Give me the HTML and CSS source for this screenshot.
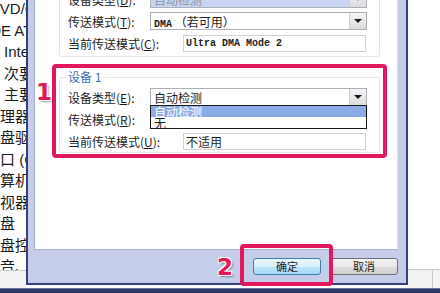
FILE: index.html
```html
<!DOCTYPE html>
<html lang="zh-CN">
<head>
    <meta charset="UTF-8">
    <title>IDE 通道属性</title>
    <link rel="stylesheet" href="styles.css">
</head>
<body>
    <div class="screen">
        <div class="main">
            <div class="tree">
                <div class="tree-list">
                    <div class="node n-dvd">DVD/CD-ROM 驱动器</div>
                    <div class="node n-ide">IDE ATA/ATAPI 控制器</div>
                    <div class="node n-sub">Intel(R) 82371AB/EB PCI Bus Master IDE Controller</div>
                    <div class="node n-sub">次要 IDE 通道</div>
                    <div class="node n-sub">主要 IDE 通道</div>
                    <div class="node n-top">处理器</div>
                    <div class="node n-top">磁盘驱动器</div>
                    <div class="node n-top">端口 (COM 和 LPT)</div>
                    <div class="node n-top">计算机</div>
                    <div class="node n-top">监视器</div>
                    <div class="node n-top">键盘</div>
                    <div class="node n-top">软盘控制器</div>
                    <div class="node n-top">声音、视频和游戏控制器</div>
                </div>
                <div class="tree-status"></div>
            </div>

            <div class="dialog">
                <div class="page">
                    <fieldset class="group group-top">
                        <legend>设备 0</legend>
                        <div class="row">
                            <label>设备类型(<u>D</u>):</label>
                            <div class="combo combo-off">
                                <span class="combo-text">自动检测</span>
                                <span class="combo-btn"></span>
                            </div>
                        </div>
                        <div class="row">
                            <label>传送模式(<u>T</u>):</label>
                            <div class="combo">
                                <span class="combo-text"><span class="mono">DMA</span> （若可用）</span>
                                <span class="combo-btn"></span>
                            </div>
                        </div>
                        <div class="row">
                            <label>当前传送模式(<u>C</u>):</label>
                            <div class="field mono">Ultra DMA Mode 2</div>
                        </div>
                    </fieldset>

                    <div class="mark">
                        <span class="step step-one">1</span>
                        <fieldset class="group">
                            <legend>设备 1</legend>
                            <div class="row">
                                <label>设备类型(<u>E</u>):</label>
                                <div class="combo">
                                    <span class="combo-text">自动检测</span>
                                    <span class="combo-btn"></span>
                                    <div class="combo-list">
                                        <div class="combo-item active">自动检测</div>
                                        <div class="combo-item">无</div>
                                    </div>
                                </div>
                            </div>
                            <div class="row">
                                <label>传送模式(<u>R</u>):</label>
                            </div>
                            <div class="row">
                                <label>当前传送模式(<u>U</u>):</label>
                                <div class="field">不适用</div>
                            </div>
                        </fieldset>
                    </div>
                </div>

                <div class="buttons">
                    <span class="step">2</span>
                    <button class="btn btn-ok">确定</button>
                    <button class="btn">取消</button>
                </div>
            </div>

            <div class="side">
                <div class="side-fill"></div>
                <div class="side-status"><span class="side-cell"></span></div>
            </div>
        </div>
        <div class="taskbar"></div>
    </div>
</body>
</html>
```

FILE: styles.css
```css
body {
    margin: 0;
    font-family: "Liberation Sans", "Noto Sans CJK SC", sans-serif;
    background: #ffffff;
    overflow: hidden;
}
.screen {
    width: 440px;
    height: 293px;
    display: flex;
    flex-direction: column;
}
.main {
    display: flex;
    height: 288px;
}

/* arbre des périphériques, à gauche */
.tree {
    width: 26px;
    display: flex;
    flex-direction: column;
    overflow: hidden;
    background: #ffffff;
}
.tree-list {
    height: 270px;
    overflow: hidden;
    font-size: 15px;
    line-height: 21.5px;
    color: #1c1c1c;
}
.node {
    white-space: nowrap;
}
.node:first-child {
    margin-top: -2px;
}
.n-dvd { margin-left: -11px; }
.n-ide { margin-left: -14px; }
.n-sub { margin-left: 4px; }
.n-top { margin-left: -15px; }
.tree-status {
    flex: 1;
    border-top: 1px solid #c9c9c9;
    background: #f3f3f3;
}

/* fenêtre */
.dialog {
    width: 364px;
    height: 283px;
    padding: 0 8px 0 6px;
    background: #c5cdea;
    border-left: 2px solid #34417a;
    border-right: 2px solid #34417a;
    border-bottom: 2px solid #34417a;
    display: flex;
    flex-direction: column;
}
.page {
    height: 250px;
    box-sizing: border-box;
    background: #ffffff;
    border-left: 1px solid #a9b1c8;
    border-right: 1px solid #d9dde8;
    border-bottom: 1px solid #a9b1c8;
    overflow: hidden;
    font-family: "Noto Sans CJK SC", "Liberation Sans", sans-serif;
    font-size: 12px;
    color: #1e1e1e;
}
.group {
    width: 321px;
    box-sizing: border-box;
    margin: 0;
    padding: 2px 0 0 8px;
    border: 1px solid #e1e6ec;
    border-radius: 3px;
}
.group legend {
    padding: 0 2px;
    margin-left: -2px;
    line-height: 14px;
    color: #3b6cb3;
}
.group-top {
    margin: -28px 0 0 24px;
    padding-bottom: 2px;
}
.mark {
    position: relative;
    width: 321px;
    margin: 7px 0 0 17px;
    padding: 2px 3px 1px;
    border: 4px solid #e3175b;
    border-radius: 4px;
}
.row {
    display: flex;
    align-items: center;
    height: 22px;
}
.row label {
    width: 82px;
    flex-shrink: 0;
    white-space: nowrap;
}
.row u {
    text-decoration-thickness: 1px;
    text-underline-offset: 1px;
}
.mono {
    font-family: "Liberation Mono", monospace;
    font-size: 10px;
    font-weight: bold;
}

/* listes déroulantes */
.combo {
    position: relative;
    display: flex;
    align-items: center;
    width: 217px;
    height: 18px;
    box-sizing: border-box;
    border: 1px solid #abb0b8;
    background: #ffffff;
}
.combo-text {
    flex: 1;
    padding-left: 3px;
    white-space: nowrap;
}
.combo-btn {
    width: 16px;
    height: 16px;
    border-left: 1px solid #d0d0d0;
    background: linear-gradient(#f5f5f5, #dcdcdc);
    display: flex;
    align-items: center;
    justify-content: center;
}
.combo-btn::after {
    content: "";
    border-left: 4px solid transparent;
    border-right: 4px solid transparent;
    border-top: 4px solid #1a1a1a;
}
.combo-off {
    background: #c9d5f1;
    color: #8c93a6;
}
.combo-off .combo-btn::after {
    border-top-color: #8c93a6;
}
.combo-list {
    position: absolute;
    top: 100%;
    left: -1px;
    right: -1px;
    border: 1px solid #1a1a1a;
    background: #ffffff;
}
.combo-item {
    height: 11px;
    line-height: 11px;
    padding-left: 3px;
}
.combo-item.active {
    background: #8cabe6;
    color: #ffffff;
}
.field {
    width: 183px;
    height: 17px;
    box-sizing: border-box;
    margin-left: 33px;
    padding-left: 2px;
    line-height: 15px;
    border: 1px solid #cdd1d8;
    white-space: nowrap;
}

/* boutons */
.buttons {
    position: relative;
    flex: 1;
    display: flex;
    align-items: center;
    justify-content: flex-end;
    gap: 9px;
    font-family: "Noto Sans CJK SC", sans-serif;
}
.btn {
    width: 68px;
    height: 17px;
    padding: 0;
    font-family: "Noto Sans CJK SC", sans-serif;
    font-size: 11px;
    line-height: 15px;
    color: #1e1e1e;
    border: 1px solid #707070;
    border-radius: 3px;
    background: linear-gradient(#f3f3f3, #ebebeb 50%, #dddddd 50%, #cfcfcf);
}
.btn-ok {
    position: relative;
    border-color: #3c7fb1;
    background: linear-gradient(#eaf6fd, #d9f0fc 50%, #bee6fd 50%, #a7d9f5);
}
.btn-ok::before {
    content: "";
    position: absolute;
    left: -14px;
    right: -13px;
    top: -15px;
    bottom: -12px;
    border: 4px solid #e3175b;
    border-radius: 4px;
}
.step {
    margin-right: 11px;
    font-family: "DejaVu Sans", sans-serif;
    font-size: 23px;
    line-height: 24px;
    font-weight: bold;
    color: #e3175b;
    text-shadow: 1px 1px 0 #fff, -1px -1px 0 #fff, 1px -1px 0 #fff, -1px 1px 0 #fff,
        2px 2px 2px rgba(0, 0, 0, 0.35);
}
.step-one {
    position: absolute;
    left: -20px;
    top: 12px;
    margin: 0;
}

/* à droite */
.side {
    flex: 1;
    display: flex;
    flex-direction: column;
}
.side-fill {
    height: 269px;
    background: #ffffff;
}
.side-status {
    flex: 1;
    border-top: 1px solid #c9c9c9;
    background: #f3f3f3;
}
.side-cell {
    display: block;
    width: 24px;
    height: 100%;
    border-right: 1px solid #c9c9c9;
}
.taskbar {
    flex: 1;
    background: #2f3b66;
    border-top: 1px solid #6a76a0;
}
```
